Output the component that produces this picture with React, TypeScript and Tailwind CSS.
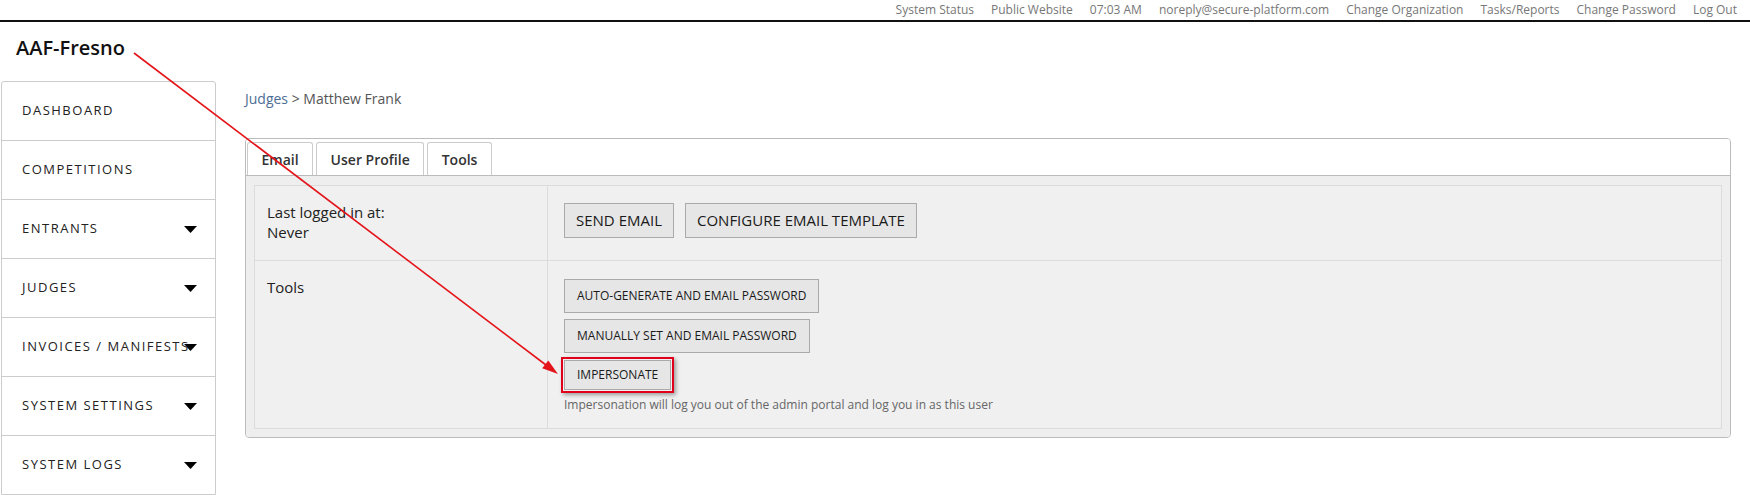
import React from 'react';

const topLinks = [
  'System Status',
  'Public Website',
  '07:03 AM',
  'noreply@secure-platform.com',
  'Change Organization',
  'Tasks/Reports',
  'Change Password',
  'Log Out',
];

const navItems: { label: string; caret?: boolean }[] = [
  { label: 'DASHBOARD' },
  { label: 'COMPETITIONS' },
  { label: 'ENTRANTS', caret: true },
  { label: 'JUDGES', caret: true },
  { label: 'INVOICES / MANIFESTS', caret: true },
  { label: 'SYSTEM SETTINGS', caret: true },
  { label: 'SYSTEM LOGS', caret: true },
];

const Caret = () => (
  <svg width="13" height="7" viewBox="0 0 13 7" className="shrink-0 relative">
    <path d="M0 0 H13 L6.5 7 Z" fill="#000" />
  </svg>
);

const GrayButton: React.FC<{ children: React.ReactNode; big?: boolean }> = ({ children, big }) => (
  <button
    className={
      big
        ? 'h-[35px] px-[11px] bg-[#e6e6e6] border border-[#aaaaaa] text-[15px] font-medium text-[#1a1a1a] whitespace-nowrap'
        : 'h-[34px] px-[12px] bg-[#e6e6e6] border border-[#aaaaaa] text-[12px] font-medium text-[#1a1a1a] whitespace-nowrap'
    }
  >
    {children}
  </button>
);

export default function App() {
  return (
    <div className="relative w-[1750px] h-[495px] overflow-hidden bg-white font-['Open_Sans',sans-serif] text-[#222]">
      {/* Top bar */}
      <div className="h-[22px] border-b-2 border-[#111] flex items-center justify-end gap-[17px] pr-[13px] text-[12px] text-[#777] leading-[20px]">
        {topLinks.map((l) => (
          <span key={l}>{l}</span>
        ))}
      </div>

      {/* Org title */}
      <div className="h-[59px] pt-[12px] pl-[16px] text-[20px] leading-[27px] font-semibold text-[#111]">
        AAF-Fresno
      </div>

      <div className="flex">
        {/* Sidebar */}
        <nav className="ml-[1px] w-[215px] border border-[#cccccc] rounded-t-[3px]">
          {navItems.map((item, i) => (
            <div
              key={item.label}
              className={`h-[58px] flex items-center pl-[20px] pr-[18px] ${i < navItems.length - 1 ? 'border-b border-[#cccccc] box-content' : ''}`}
            >
              <span className="flex-1 min-w-0 whitespace-nowrap text-[13px] tracking-[1.5px] text-[#222]">
                {item.label}
              </span>
              {item.caret && <Caret />}
            </div>
          ))}
        </nav>

        {/* Main */}
        <main className="ml-[29px]">
          <div className="mt-[8px] h-[20px] text-[14px] leading-[20px]">
            <span className="text-[#4d6d94]">Judges</span>
            <span className="text-[#555]"> &gt; Matthew Frank</span>
          </div>

          <div className="mt-[29px] w-[1486px] border border-[#bbbbbb] rounded-[4px] overflow-hidden">
            {/* Tabs */}
            <div className="flex gap-[3px] pl-[1px] pt-[3px] bg-white border-b border-[#bbbbbb]">
              {['Email', 'User Profile', 'Tools'].map((t) => (
                <div
                  key={t}
                  className="h-[33px] px-[13.5px] flex items-center border border-b-0 border-[#cccccc] rounded-t-[3px] bg-white text-[14px] font-semibold text-[#333]"
                >
                  {t}
                </div>
              ))}
            </div>

            {/* Content */}
            <div className="bg-[#eeeeee] pt-[9px] pb-[8px] px-[8px]">
              <div className="border border-[#dcdcdc] bg-[#f0f0f0]">
                <div className="flex border-b border-[#dcdcdc]">
                  <div className="w-[293px] border-r border-[#dcdcdc] pl-[12px] pt-[16px] pb-[18px] text-[15px] leading-[20px] text-[#222]">
                    <div>Last logged in at:</div>
                    <div>Never</div>
                  </div>
                  <div className="flex-1 pl-[16px] pt-[17px] flex items-start gap-[11px]">
                    <GrayButton big>SEND EMAIL</GrayButton>
                    <GrayButton big>CONFIGURE EMAIL TEMPLATE</GrayButton>
                  </div>
                </div>
                <div className="flex h-[167px]">
                  <div className="w-[293px] border-r border-[#dcdcdc] pl-[12px] pt-[16px] text-[15px] leading-[20px] text-[#222]">
                    Tools
                  </div>
                  <div className="flex-1 pl-[16px] pt-[18px] flex flex-col items-start">
                    <GrayButton>AUTO-GENERATE AND EMAIL PASSWORD</GrayButton>
                    <div className="mt-[6px]">
                      <GrayButton>MANUALLY SET AND EMAIL PASSWORD</GrayButton>
                    </div>
                    <div className="mt-[4px] -ml-[3px] border-2 border-[#e0001b] p-[1px] shadow-[2px_2px_4px_rgba(0,0,0,0.35)]">
                      <button className="h-[30px] px-[12px] bg-[#e6e6e6] border border-[#aaaaaa] text-[12px] font-medium text-[#1a1a1a]">
                        IMPERSONATE
                      </button>
                    </div>
                    <div className="mt-[4px] text-[12px] leading-[16px] text-[#666]">
                      Impersonation will log you out of the admin portal and log you in as this user
                    </div>
                  </div>
                </div>
              </div>
            </div>
          </div>
        </main>
      </div>

      {/* Annotation arrow */}
      <svg className="absolute inset-0 pointer-events-none" width="1750" height="495" viewBox="0 0 1750 495">
        <line x1="134" y1="53" x2="546" y2="365" stroke="#e3151a" strokeWidth="1.6" />
        <polygon points="558,374 542.2,368.3 548.3,360.4" fill="#e3151a" />
      </svg>
    </div>
  );
}
